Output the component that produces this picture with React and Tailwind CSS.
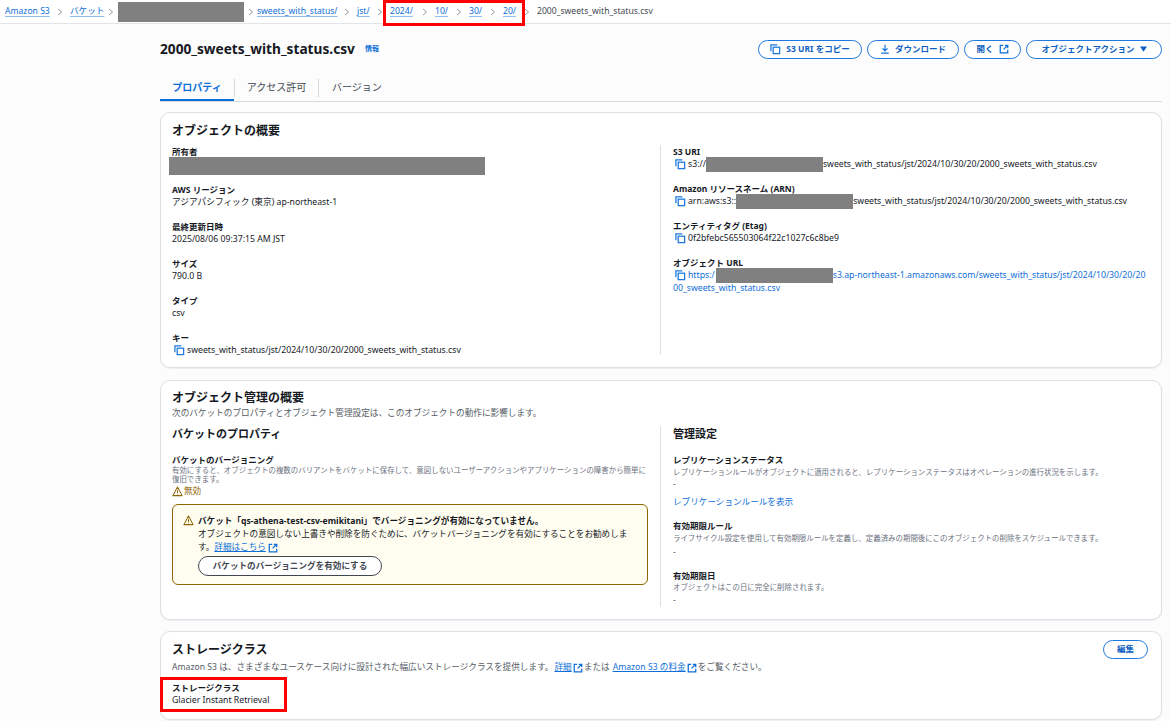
import React from 'react';

const FONT = '"Noto Sans", "Noto Sans CJK JP", sans-serif';

const CopyIcon = ({ className = 'ml-[2px] mr-[2px]' }) => (
  <svg viewBox="0 0 12 12" className={`w-[11px] h-[11px] shrink-0 ${className}`} fill="none" stroke="#1f7ae0" strokeWidth="1.4">
    <path d="M1 8V1h7" />
    <rect x="3.5" y="3.5" width="7" height="7" />
  </svg>
);

const ExternalIcon = () => (
  <svg viewBox="0 0 12 12" className="w-[10px] h-[10px] inline-block shrink-0" fill="none" stroke="#0f6fd8" strokeWidth="1.5">
    <path d="M5 1.5H1.5v9h9V7" />
    <path d="M7 1.5h3.5V5M10.5 1.5 5.5 6.5" />
  </svg>
);

const WarnIcon = ({ color = '#8d6605' }) => (
  <svg viewBox="0 0 12 12" className="w-[11px] h-[11px] shrink-0" fill="none" stroke={color} strokeWidth="1.1">
    <path d="M6 1.2 11 10.5H1Z" strokeLinejoin="round" />
    <path d="M6 4.6v3M6 8.4v1" />
  </svg>
);

const Sep = ({ className }) => (
  <span className={`flex justify-center shrink-0 ${className}`}>
    <svg viewBox="0 0 8 10" className="w-[6px] h-[8px]" fill="none" stroke="#6b7280" strokeWidth="1">
      <path d="M1.5 1 6 5 1.5 9" />
    </svg>
  </span>
);

const Redacted = ({ className }) => <span className={`inline-block bg-[#808080] align-middle shrink-0 ${className}`} />;

const Crumb = ({ children, className = '' }) => (
  <a className={`shrink-0 text-[#0f6fd8] underline decoration-[#8fbdf0] underline-offset-2 ${className}`}>{children}</a>
);

const PillButton = ({ children, className = '' }) => (
  <button className={`h-[19px] rounded-full border-[1.5px] border-[#1f7ae0] bg-white text-[#0f5fc0] text-[8.5px] font-bold flex items-center justify-center gap-[5px] ${className}`}>
    {children}
  </button>
);

const Field = ({ label, children, className = 'mb-[11px]' }) => (
  <div className={`text-[8.7px] leading-[13px] text-[#16191f] ${className}`}>
    <div className="font-bold text-[8.5px]">{label}</div>
    {children}
  </div>
);

const CopyValue = ({ children, className = '' }) => (
  <div className={`flex items-center h-[13px] whitespace-nowrap ${className}`}>
    <CopyIcon />
    {children}
  </div>
);

const Desc = ({ children, className = '' }) => <div className={`text-[7.45px] leading-[9px] text-[#6b7280] ${className}`}>{children}</div>;

const Card = ({ children, className = '' }) => (
  <section className={`bg-white border border-[#dcdfe4] rounded-[10px] shadow-[0_1px_1px_#eceef1] ${className}`}>{children}</section>
);

const path = 'sweets_with_status/jst/2024/10/30/20/2000_sweets_with_status.csv';

export default function App() {
  return (
    <div className="relative w-[1171px] h-[721px] overflow-hidden bg-[#fcfcfd]" style={{ fontFamily: FONT }}>
      {/* パンくず */}
      <nav className="h-[24px] bg-white border-b border-[#e2e4e8] flex items-center text-[8.6px] whitespace-nowrap pl-[5px]">
        <Crumb className="w-[45px]">Amazon S3</Crumb>
        <Sep className="w-[20px]" />
        <Crumb className="w-[33px]">バケット</Crumb>
        <Sep className="w-[15px]" />
        <Redacted className="w-[126px] h-[20px]" />
        <Sep className="w-[13px]" />
        <Crumb className="w-[80px]">sweets_with_status/</Crumb>
        <Sep className="w-[20px]" />
        <Crumb className="w-[13px]">jst/</Crumb>
        <Sep className="w-[20px]" />
        <Crumb className="w-[24px]">2024/</Crumb>
        <Sep className="w-[21px]" />
        <Crumb className="w-[13px]">10/</Crumb>
        <Sep className="w-[21px]" />
        <Crumb className="w-[13px]">30/</Crumb>
        <Sep className="w-[21px]" />
        <Crumb className="w-[13px]">20/</Crumb>
        <Sep className="w-[21px]" />
        <span className="text-[#414750]">2000_sweets_with_status.csv</span>
      </nav>

      <main className="pl-[160px] pr-[9px]">
        {/* タイトル */}
        <div className="flex items-center justify-between h-[50px]">
          <div className="flex items-center">
            <h1 className="text-[13.7px] font-bold text-[#16191f]">2000_sweets_with_status.csv</h1>
            <a className="ml-[10px] text-[7px] font-bold text-[#0f6fd8]">情報</a>
          </div>
          <div className="flex gap-[5px]">
            <PillButton className="w-[104px]">
              <CopyIcon className="" />S3 URI をコピー
            </PillButton>
            <PillButton className="w-[92px]">
              <svg viewBox="0 0 12 12" className="w-[10px] h-[10px]" fill="none" stroke="#0f6fd8" strokeWidth="1.4">
                <path d="M6 1v7M3 5.3 6 8.3l3-3M1.5 11h9" />
              </svg>
              ダウンロード
            </PillButton>
            <PillButton className="w-[57px]">
              開く <ExternalIcon />
            </PillButton>
            <PillButton className="w-[136px]">
              オブジェクトアクション
              <svg viewBox="0 0 8 6" className="w-[7px] h-[6px]" fill="#0f5fc0"><path d="M0 0h8L4 6Z" /></svg>
            </PillButton>
          </div>
        </div>

        {/* タブ */}
        <div className="flex items-center h-[28px] border-b border-[#d5d8dd] text-[10px] text-[#414750] mb-[10px]">
          <div className="w-[74px] h-full pt-[1px] flex items-center justify-center font-bold text-[#0f6fd8] border-b-2 border-[#0f6fd8]">プロパティ</div>
          <div className="w-[85px] h-[18px] flex items-center justify-center border-l border-r border-[#d5d8dd]">アクセス許可</div>
          <div className="pl-[13px]">バージョン</div>
        </div>

        {/* オブジェクトの概要 */}
        <Card className="h-[256px] px-[11px] pt-[9px] mb-[12px]">
          <h2 className="text-[12px] font-bold leading-[18px] text-[#16191f] mb-[5px]">オブジェクトの概要</h2>
          <div className="flex">
            <div className="w-[488px] h-[210px] shrink-0">
              <Field label="所有者" className="mb-[8px]">
                <div className="h-[18px] -mt-[1px] -ml-[3px] w-[316px] bg-[#808080]" />
              </Field>
              <Field label="AWS リージョン">アジアパシフィック (東京) ap-northeast-1</Field>
              <Field label="最終更新日時">2025/08/06 09:37:15 AM JST</Field>
              <Field label="サイズ">790.0 B</Field>
              <Field label="タイプ">csv</Field>
              <Field label="キー" className="">
                <CopyValue>{path}</CopyValue>
              </Field>
            </div>
            <div className="flex-1 min-w-0 border-l border-[#dcdfe4] pl-[12px] h-[210px]">
              <Field label="S3 URI">
                <CopyValue>s3://<Redacted className="w-[117px] h-[15px]" />{path}</CopyValue>
              </Field>
              <Field label="Amazon リソースネーム (ARN)">
                <CopyValue>arn:aws:s3::<Redacted className="w-[117px] h-[15px]" />{path}</CopyValue>
              </Field>
              <Field label="エンティティタグ (Etag)">
                <CopyValue>0f2bfebc565503064f22c1027c6c8be9</CopyValue>
              </Field>
              <Field label="オブジェクト URL" className="">
                <CopyValue className="text-[#0f6fd8]">
                  https:/<Redacted className="ml-[1px] w-[117px] h-[15px]" />s3.ap-northeast-1.amazonaws.com/sweets_with_status/jst/2024/10/30/20/20
                </CopyValue>
                <div className="text-[#0f6fd8]">00_sweets_with_status.csv</div>
              </Field>
            </div>
          </div>
        </Card>

        {/* オブジェクト管理の概要 */}
        <Card className="h-[240px] px-[11px] pt-[8px] mb-[11px]">
          <h2 className="text-[12px] font-bold leading-[18px] text-[#16191f]">オブジェクト管理の概要</h2>
          <div className="text-[8.65px] leading-[12px] text-[#545b64] mb-[7px]">次のバケットのプロパティとオブジェクト管理設定は、このオブジェクトの動作に影響します。</div>
          <div className="flex">
            <div className="w-[488px] shrink-0">
              <h3 className="text-[11px] font-bold leading-[16px] text-[#16191f] mb-[12px]">バケットのプロパティ</h3>
              <div className="text-[8.5px] font-bold leading-[12px] text-[#16191f]">バケットのバージョニング</div>
              <Desc className="w-[476px]">有効にすると、オブジェクトの複数のバリアントをバケットに保存して、意図しないユーザーアクションやアプリケーションの障害から簡単に復旧できます。</Desc>
              <div className="flex items-center gap-[1px] text-[8.6px] leading-[12px] text-[#8d6605] mt-[1px] mb-[7px]">
                <WarnIcon />無効
              </div>
              <div className="w-[476px] h-[81px] rounded-[6px] border-[1.5px] border-[#8d6605] bg-[#fffdf0] flex pl-[10px] pt-[10px] text-[8.6px] leading-[13px] text-[#16191f]">
                <WarnIcon />
                <div className="ml-[4px] w-[436px]">
                  <div className="font-bold">バケット「qs-athena-test-csv-emikitani」でバージョニングが有効になっていません。</div>
                  <div>
                    オブジェクトの意図しない上書きや削除を防ぐために、バケットバージョニングを有効にすることをお勧めします。
                    <a className="text-[#0f6fd8] underline">詳細はこちら</a> <ExternalIcon />
                  </div>
                  <button className="mt-[2px] w-[184px] h-[20px] rounded-full border-[1.5px] border-[#414750] bg-white text-[8.6px] font-bold text-[#414750]">
                    バケットのバージョニングを有効にする
                  </button>
                </div>
              </div>
            </div>
            <div className="flex-1 min-w-0 border-l border-[#dcdfe4] pl-[12px] h-[181px]">
              <h3 className="text-[11px] font-bold leading-[16px] text-[#16191f] mb-[12px]">管理設定</h3>
              <div className="text-[8.5px] font-bold leading-[12px] text-[#16191f]">レプリケーションステータス</div>
              <Desc className="mt-[2px]">レプリケーションルールがオブジェクトに適用されると、レプリケーションステータスはオペレーションの進行状況を示します。</Desc>
              <div className="text-[8.6px] leading-[13px] text-[#545b64] mt-[1px]">-</div>
              <a className="block text-[8.6px] leading-[13px] text-[#0f6fd8] mt-[5px] mb-[11px]">レプリケーションルールを表示</a>
              <div className="text-[8.5px] font-bold leading-[12px] text-[#16191f]">有効期限ルール</div>
              <Desc className="mt-[2px]">ライフサイクル設定を使用して有効期限ルールを定義し、定義済みの期間後にこのオブジェクトの削除をスケジュールできます。</Desc>
              <div className="text-[8.6px] leading-[13px] text-[#545b64] mt-[3px] mb-[11px]">-</div>
              <div className="text-[8.5px] font-bold leading-[12px] text-[#16191f]">有効期限日</div>
              <Desc className="mt-[1px]">オブジェクトはこの日に完全に削除されます。</Desc>
              <div className="text-[8.6px] leading-[13px] text-[#545b64] mt-[2px]">-</div>
            </div>
          </div>
        </Card>

        {/* ストレージクラス */}
        <Card className="h-[89px] px-[11px] pt-[8px]">
          <div className="flex items-start justify-between pr-[2px]">
            <h2 className="text-[12px] font-bold leading-[18px] text-[#16191f] mt-[1px]">ストレージクラス</h2>
            <PillButton className="w-[45px]">編集</PillButton>
          </div>
          <div className="text-[8.65px] leading-[13px] text-[#545b64] mt-[2px] mb-[7px] flex items-center gap-[1px] whitespace-nowrap">
            Amazon S3 は、さまざまなユースケース向けに設計された幅広いストレージクラスを提供します。
            <a className="text-[#0f6fd8] underline">詳細</a> <ExternalIcon />または <a className="ml-[2px] text-[#0f6fd8] underline">Amazon S3 の料金</a> <ExternalIcon />をご覧ください。
          </div>
          <Field label="ストレージクラス" className="">Glacier Instant Retrieval</Field>
        </Card>
      </main>

      {/* 赤枠の注記 */}
      <div className="absolute left-[383px] top-0 w-[142px] h-[26px] border-[3px] border-[#ff0000]" />
      <div className="absolute left-[160px] top-[677px] w-[127px] h-[35px] border-[3px] border-[#ff0000]" />
    </div>
  );
}
